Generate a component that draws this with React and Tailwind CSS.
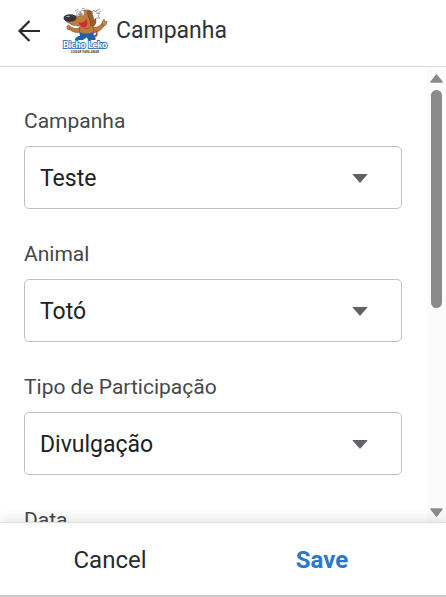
import React from "react";

const fields = [
  { id: "campanha", label: "Campanha", options: ["Teste"] },
  { id: "animal", label: "Animal", options: ["Totó"] },
  { id: "tipo", label: "Tipo de Participação", options: ["Divulgação"] },
];

function Logo() {
  return (
    <svg viewBox="0 0 48 48" className="h-12 w-12 shrink-0" role="img" aria-label="Bicho Leko">
      <g stroke="#6b4325" strokeWidth="0.5" strokeLinejoin="round">
        <path d="M19 20 C15 23 12 21 8 19 L8 22 C12 26 17 26 20 25 Z" fill="#c07a3c" />
        <path d="M31 19 C35 22 39 19 42 15 L44 17 C42 22 37 26 30 26 Z" fill="#c07a3c" />
        <path d="M20 18 L31 18 C34 23 33 27 31 30 L20 30 C18 26 18 22 20 18 Z" fill="#c07a3c" />
        <path d="M32 28 C35 29 36 27 35 24 C38 27 36 31 32 30 Z" fill="#9b5c29" />
        <path d="M5 10 C7 7 12 9 16 9 C18 5 22 3 25 3 C31 2 33 8 34 13 C35 18 32 21 30 18 C29 22 24 23 21 19 C17 19 11 19 8 16 C4 15 3 12 5 10 Z" fill="#c07a3c" />
        <path d="M27 4 C32 3 35 9 35 14 C35 19 31 20 29 17 C30 12 25 8 27 4 Z" fill="#9b5c29" />
        <path d="M6 19 L8 18 L9 20 L8 23 L6 22 Z M41 15 L43 12 L44 15 L46 14 L45 18 L42 19 Z" fill="#d18a48" />
      </g>
      <path d="M17 15 C20 17 23 15 26 12 C27 17 26 21 23 20 C20 20 19 18 17 15 Z" fill="#d92835" />
      <ellipse cx="9" cy="11" rx="6.5" ry="3.8" fill="#35343a" />
      <ellipse cx="7" cy="9.5" rx="2" ry="0.8" fill="#9aa0a8" />
      <g fill="#fff" stroke="#70757b" strokeWidth="0.6">
        <ellipse cx="17.5" cy="6.500" rx="1.8" ry="2.6" />
        <ellipse cx="21.500" cy="6" rx="2" ry="2.8" />
        <path d="M31 5 L33 3 L34 5 L36 3 L36 7 L39 6 L37 9 L39 11 L35 11 L33 13 Z" />
      </g>
      <circle cx="18" cy="7" r="0.7" fill="#222" />
      <circle cx="21" cy="7" r="0.7" fill="#222" />
      <path d="M14 4 L17 2 M21 2 L24 1 M36 3 L39 2 M37 6 L40 4" stroke="#777" strokeWidth="0.6" />
      <path d="M19 25 C22 27 28 27 32 25 L32 29 C34 30 36 32 34 33 L27 33 L26 30 L22 33 L14 33 C14 31 16 29 19 29 Z" fill="#2260a8" />
      <text x="24" y="41" textAnchor="middle" fontSize="9" fontWeight="900" fill="#fff" stroke="#3579b9" strokeWidth="1.8" paintOrder="stroke" className="font-['Lato',sans-serif]">Bicho Leko</text>
      <text x="24" y="46" textAnchor="middle" fontSize="3" fontWeight="700" fill="#3b3d42" className="font-['Roboto',sans-serif]">CUIDAR PARA AMAR</text>
    </svg>
  );
}

function SelectField({ field }) {
  return (
    <div className="flex flex-col gap-[10px]">
      <label htmlFor={field.id} className="text-[21px] leading-[30px] text-[#46474b]">
        {field.label}
      </label>
      <div className="grid items-center">
        <select
          id={field.id}
          className="col-start-1 row-start-1 h-[63px] w-full appearance-none rounded-[5px] border border-[#bdc1c6] bg-white pt-[3px] pr-16 pl-[15px] text-[23px] text-[#202124]"
        >
          {field.options.map((o) => (
            <option key={o}>{o}</option>
          ))}
        </select>
        <svg viewBox="0 0 16 9" className="pointer-events-none col-start-1 row-start-1 mt-0.5 mr-[34px] h-[9px] w-4 justify-self-end" aria-hidden="true">
          <path d="M1 0H15Q16 0 15 1L8 9L1 1Q0 0 1 0Z" fill="#5f6368" />
        </svg>
      </div>
    </div>
  );
}

export default function App() {
  return (
    <div className="flex h-screen flex-col bg-white font-['Roboto',sans-serif] text-[#303236]">
      <header className="flex h-[67px] shrink-0 items-center border-b border-[#d9d9d9] px-[17px] pb-1">
        <button type="button" aria-label="Back" className="mr-5">
          <svg viewBox="0 0 24 24" className="h-6 w-6" fill="none" stroke="#292b2f" strokeWidth="2.2" aria-hidden="true">
            <path d="M23 12H3M12.5 2L2.5 12L12.5 22" />
          </svg>
        </button>
        <Logo />
        <h1 className="ml-[7px] text-[23px] leading-[30px]">Campanha</h1>
      </header>

      <div className="flex min-h-0 flex-1">
        <main className="flex min-w-0 flex-1 flex-col gap-[30px] overflow-y-auto pt-[39px] pr-[25px] pb-6 pl-6 [scrollbar-width:none]">
          {fields.map((f) => (
            <SelectField key={f.id} field={f} />
          ))}
          <div className="flex flex-col gap-[10px]">
            <label htmlFor="data" className="text-[21px] leading-[30px] text-[#46474b]">Data</label>
            <input id="data" type="text" className="h-[63px] w-full shrink-0 rounded-[5px] border border-[#bdc1c6] px-[15px] text-[23px]" />
          </div>
        </main>
        <div className="flex w-[19px] shrink-0 flex-col items-center bg-[#fbfbfb] pt-[7px] pb-[5px]" aria-hidden="true">
          <svg viewBox="0 0 13 9" className="h-[9px] w-[13px] shrink-0">
            <path d="M6.5 1L12 8H1Z" fill="#8b8b8b" stroke="#8b8b8b" strokeWidth="1.5" strokeLinejoin="round" />
          </svg>
          <div className="my-[7px] min-h-0 w-[11px] flex-1">
            <div className="h-[53%] rounded-full bg-[#8b8b8b]" />
          </div>
          <svg viewBox="0 0 13 9" className="h-[9px] w-[13px] shrink-0">
            <path d="M6.5 8L12 1H1Z" fill="#8b8b8b" stroke="#8b8b8b" strokeWidth="1.5" strokeLinejoin="round" />
          </svg>
        </div>
      </div>

      <footer className="z-10 grid h-[75px] shrink-0 grid-cols-2 border-t border-b-2 border-t-[#dedede] border-b-[#cacaca] bg-white pr-[18px] pl-1 shadow-[0_-2px_12px_rgba(0,0,0,0.12)]">
        <button type="button" className="pt-0.5 text-[24px] text-[#292b2f]">Cancel</button>
        <button type="button" className="pt-0.5 text-[24px] font-bold text-[#2b78c8]">Save</button>
      </footer>
    </div>
  );
}
